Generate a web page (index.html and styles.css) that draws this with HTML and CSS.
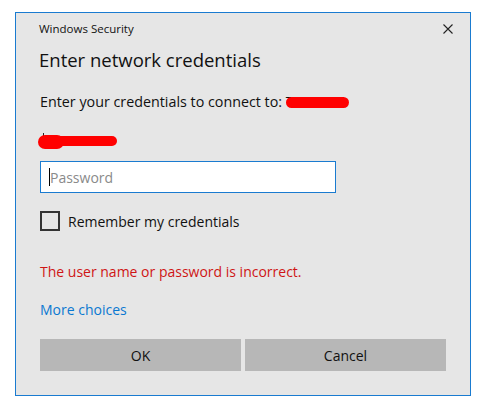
FILE: index.html
```html
<!DOCTYPE html>
<html>
<head>
<meta charset="utf-8">
<link rel="stylesheet" href="styles.css">
</head>
<body>
<div class="dialog">
  <div class="titlebar">
    <span class="title">Windows Security</span>
    <svg class="close" width="10" height="10" viewBox="0 0 10 10"><path d="M0.5 0.5 L9.5 9.5 M9.5 0.5 L0.5 9.5" stroke="#222" stroke-width="1.1" fill="none"/></svg>
  </div>
  <h1 class="heading">Enter network credentials</h1>
  <p class="connect">Enter your credentials to connect to: T<span class="redact redact-a"></span></p>
  <div class="user"><span class="mark"></span><span class="redact redact-b1"></span><span class="redact redact-b2"></span></div>
  <div class="field"><span class="caret"></span><span class="placeholder">Password</span></div>
  <label class="remember"><span class="box"></span><span>Remember my credentials</span></label>
  <p class="error">The user name or password is incorrect.</p>
  <a class="more">More choices</a>
  <div class="buttons">
    <button class="btn">OK</button>
    <button class="btn">Cancel</button>
  </div>
</div>
</body>
</html>
```
FILE: styles.css
```css
html, body { margin: 0; padding: 0; background: #fff; }
body { padding: 12px 0 0 15px; font-family: "Open Sans", "Noto Sans", sans-serif; color: #1a1a1a; }
.dialog {
  box-sizing: border-box;
  width: 456px;
  height: 384px;
  background: #e6e6e6;
  border: 1px solid #1a7bd0;
  padding: 0 24px;
  display: flex;
  flex-direction: column;
}
.titlebar { display: flex; justify-content: space-between; align-items: center; height: 31px; }
.title { font-size: 11.5px; color: #111; margin-left: -1px; }
.close { margin-right: -7px; margin-top: 1px; }
.heading { margin: 1px 0 0 -1px; font-size: 18.5px; font-weight: 400; line-height: 29px; color: #111; }
.connect { margin: 18px 0 0; font-size: 14.3px; line-height: 20px; color: #111; position: relative; }
.redact { position: absolute; background: #ff0000; filter: blur(0.5px); }
.redact-a { left: 246px; top: 5px; width: 63px; height: 11px; border-radius: 6px; }
.user { margin-top: 20px; height: 20px; position: relative; }
.user .mark { position: absolute; left: 3px; top: 1px; width: 1px; height: 4px; background: #222; }
.redact-b1 { left: -2px; top: 3px; width: 26px; height: 14px; border-radius: 7px; }
.redact-b2 { left: 6px; top: 4px; width: 71px; height: 10px; border-radius: 5px; }
.field {
  margin-top: 9px;
  box-sizing: border-box;
  width: 296px; height: 32px;
  background: #fff;
  border: 1px solid #1a7bd0;
  display: flex; align-items: center;
  padding-left: 8px;
}
.caret { width: 1px; height: 18px; background: #000; }
.placeholder { color: #8a8a8a; font-size: 14px; }
.remember { margin-top: 18px; display: flex; align-items: center; font-size: 14px; color: #111; height: 20px; }
.box { box-sizing: border-box; width: 20px; height: 20px; border: 2px solid #333; margin-right: 8px; }
.error { margin: 31px 0 0; color: #cf1515; font-size: 14px; line-height: 20px; }
.more { margin-top: 18px; color: #0a78d1; font-size: 14px; line-height: 20px; align-self: flex-start; }
.buttons { margin-top: 19px; display: flex; gap: 4px; }
.btn {
  flex: 1; height: 32px; border: none; background: #b7b7b7;
  font-family: inherit; font-size: 14px; color: #111; padding: 0;
}
```
